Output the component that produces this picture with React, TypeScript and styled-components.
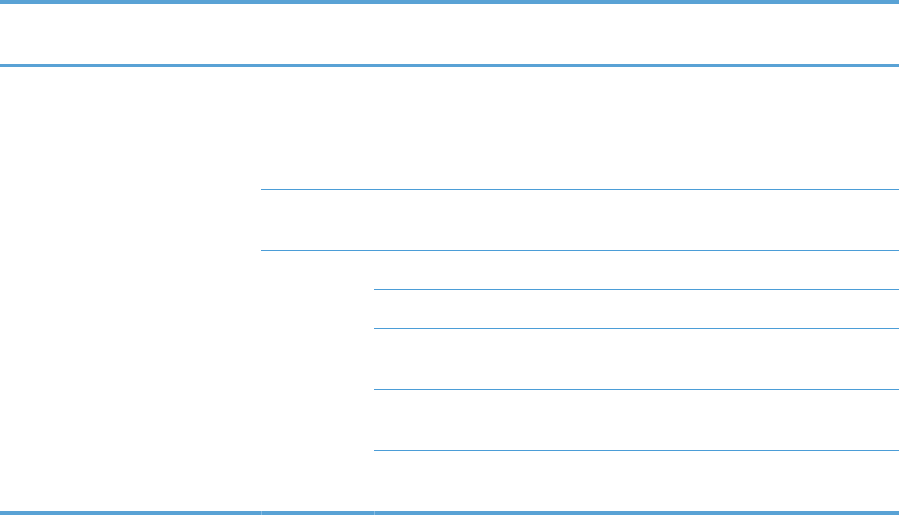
import React from "react";
import styled, { createGlobalStyle } from "styled-components";

const GlobalStyle = createGlobalStyle`
  html, body {
    margin: 0;
    padding: 0;
    background: #ffffff;
    font-family: "Liberation Sans", Arial, sans-serif;
  }
`;

const THICK = "#59a2d5";
const THIN = "#4b9dd7";
const SEAM = "#86bbe2";
const COLS = "261px 113px 525px";

const Table = styled.div`
  width: 899px;
  display: flex;
  flex-direction: column;
  border-top: 4px solid ${THICK};
`;

const HeaderRow = styled.div`
  height: 60px;
  display: grid;
  grid-template-columns: ${COLS};
  border-bottom: 3px solid ${THICK};
`;

const HeaderCell = styled.div`
  font-size: 12px;
  color: #222;
`;

const Body = styled.div`
  display: grid;
  grid-template-columns: ${COLS};
  grid-template-rows: 123px 61px 39px 39px 61px 61px 60px;
`;

const Cell = styled.div<{ $col: string; $row: string; $line?: boolean }>`
  grid-column: ${(p) => p.$col};
  grid-row: ${(p) => p.$row};
  box-sizing: border-box;
  border-bottom: ${(p) => (p.$line ? `1px solid ${THIN}` : "none")};
  font-size: 12px;
  color: #222;
`;

const Footer = styled.div`
  display: grid;
  grid-template-columns: ${COLS};
  height: 4px;
`;

const FooterSeg = styled.div<{ $seam?: boolean }>`
  background: ${THICK};
  box-sizing: border-box;
  border-left: ${(p) => (p.$seam ? `1px solid ${SEAM}` : "none")};
`;

export default function App() {
  return (
    <>
      <GlobalStyle />
      <Table>
        <HeaderRow>
          <HeaderCell />
          <HeaderCell />
          <HeaderCell />
        </HeaderRow>
        <Body>
          <Cell $col="1 / 2" $row="1 / 8" />
          <Cell $col="2 / 4" $row="1 / 2" $line />
          <Cell $col="2 / 4" $row="2 / 3" $line />
          <Cell $col="2 / 3" $row="3 / 8" />
          <Cell $col="3 / 4" $row="3 / 4" $line />
          <Cell $col="3 / 4" $row="4 / 5" $line />
          <Cell $col="3 / 4" $row="5 / 6" $line />
          <Cell $col="3 / 4" $row="6 / 7" $line />
          <Cell $col="3 / 4" $row="7 / 8" />
        </Body>
        <Footer>
          <FooterSeg />
          <FooterSeg $seam />
          <FooterSeg $seam />
        </Footer>
      </Table>
    </>
  );
}
